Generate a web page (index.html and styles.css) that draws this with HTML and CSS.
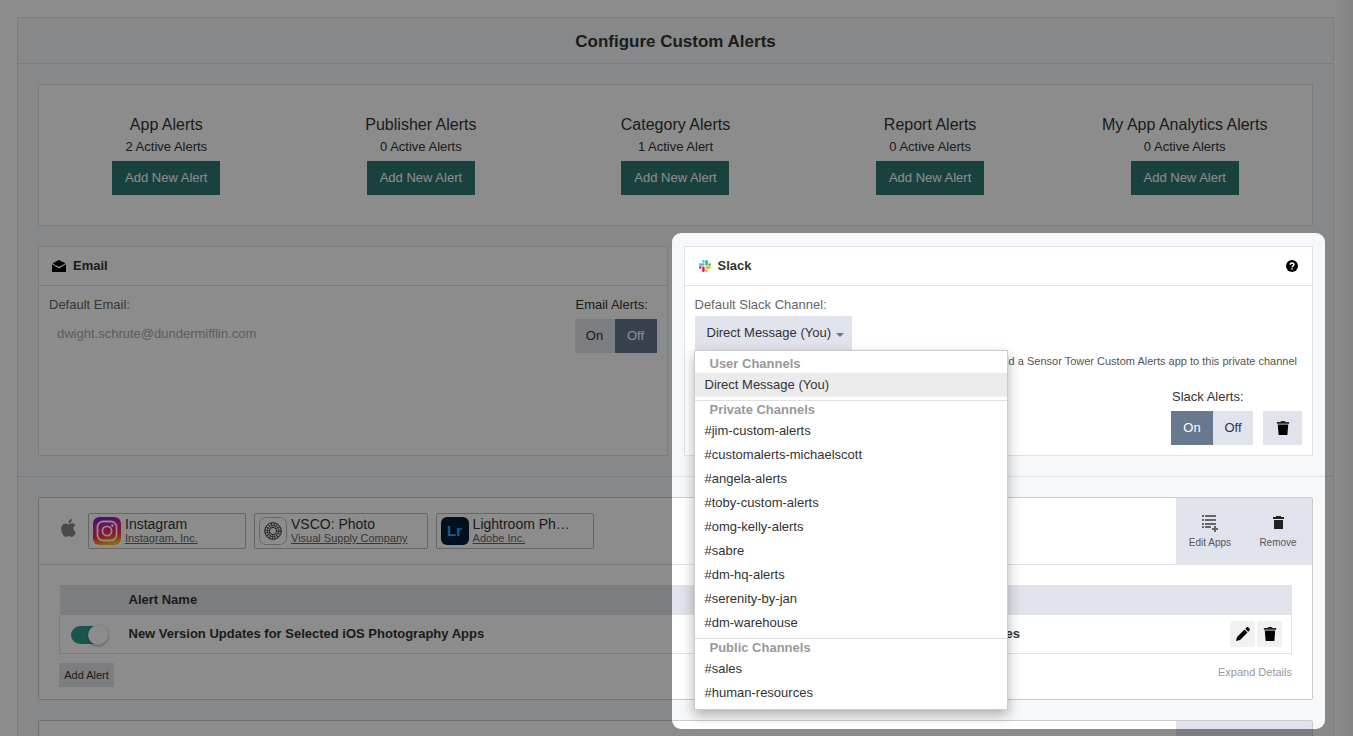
FILE: index.html
```html
<!DOCTYPE html>
<html lang="en">
<head>
<meta charset="utf-8">
<title>Configure Custom Alerts</title>
<link rel="stylesheet" href="styles.css">
</head>
<body>
<svg class="sprite" aria-hidden="true">
  <symbol id="trash" viewBox="0 0 14 16"><path d="M5 0h4l1 1h4v2H0V1h4z" opacity=".85"/><path d="M1 4h12l-1 12H2z"/></symbol>
</svg>
<div class="app">
  <main class="page">
    <h1 class="page-title">Configure Custom Alerts</h1>

    <div class="section">
      <section class="summary">
        <div class="kind"><h2>App Alerts</h2><p>2 Active Alerts</p><button class="add-new" type="button">Add New Alert</button></div>
        <div class="kind"><h2>Publisher Alerts</h2><p>0 Active Alerts</p><button class="add-new" type="button">Add New Alert</button></div>
        <div class="kind"><h2>Category Alerts</h2><p>1 Active Alert</p><button class="add-new" type="button">Add New Alert</button></div>
        <div class="kind"><h2>Report Alerts</h2><p>0 Active Alerts</p><button class="add-new" type="button">Add New Alert</button></div>
        <div class="kind"><h2>My App Analytics Alerts</h2><p>0 Active Alerts</p><button class="add-new" type="button">Add New Alert</button></div>
      </section>

      <div class="channels">
        <section class="panel">
          <header class="panel-head">
            <svg width="14" height="12" viewBox="0 0 14 12" aria-hidden="true"><path d="M7 0l6.400 3.200-2.400 1.600L7 6.800 3 4.800.6 3.200z"/><path d="M0 4.200L7 8.600l7-4.400V12H0z"/></svg>
            <h2>Email</h2>
          </header>
          <div class="panel-body email-body">
            <div class="field">
              <label class="muted" for="email">Default Email:</label>
              <input class="email" id="email" type="email" value="dwight.schrute@dundermifflin.com" disabled>
            </div>
            <div class="switcher">
              <span class="switch-label">Email Alerts:</span>
              <div class="segments"><button type="button">On</button><button type="button" class="active">Off</button></div>
            </div>
          </div>
        </section>

        <section class="panel slack">
          <header class="panel-head">
            <svg width="12" height="12" viewBox="0 0 24 24" aria-hidden="true">
              <defs><path id="lobe" d="M5.042 15.165a2.528 2.528 0 0 1-2.520 2.523A2.528 2.528 0 0 1 0 15.165a2.527 2.527 0 0 1 2.522-2.520h2.520zM6.313 15.165a2.527 2.527 0 0 1 5.042 0v6.313a2.521 2.521 0 0 1-5.042 0z"/></defs>
              <use href="#lobe" fill="#e01e5a"/><use href="#lobe" fill="#36c5f0" transform="rotate(90 12 12)"/><use href="#lobe" fill="#2eb67d" transform="rotate(180 12 12)"/><use href="#lobe" fill="#ecb22e" transform="rotate(270 12 12)"/>
            </svg>
            <h2>Slack</h2>
            <button class="help" type="button" aria-label="Help">
              <svg width="12" height="12" viewBox="0 0 12 12" aria-hidden="true"><circle cx="6" cy="6" r="6"/><path d="M4.200 4.700C4.200 2.300 7.900 2.400 7.900 4.500C7.900 5.800 6.100 5.700 6.100 7.200M6.100 8.300V9.600" fill="none" stroke="#fff" stroke-width="1.500"/></svg>
            </button>
          </header>
          <div class="panel-body">
            <span class="muted" id="channel-label">Default Slack Channel:</span>
            <div class="picker">
              <button class="picker-button" type="button" aria-haspopup="listbox" aria-expanded="true" aria-labelledby="channel-label">Direct Message (You)<span class="caret"></span></button>
              <div class="menu" role="listbox" aria-labelledby="channel-label">
                <div class="group" role="group" aria-label="User Channels">
                  <div class="group-title">User Channels</div>
                  <button type="button" role="option" aria-selected="true">Direct Message (You)</button>
                </div>
                <div class="group" role="group" aria-label="Private Channels">
                  <div class="group-title">Private Channels</div>
                  <button type="button" role="option">#jim-custom-alerts</button>
                  <button type="button" role="option">#customalerts-michaelscott</button>
                  <button type="button" role="option">#angela-alerts</button>
                  <button type="button" role="option">#toby-custom-alerts</button>
                  <button type="button" role="option">#omg-kelly-alerts</button>
                  <button type="button" role="option">#sabre</button>
                  <button type="button" role="option">#dm-hq-alerts</button>
                  <button type="button" role="option">#serenity-by-jan</button>
                  <button type="button" role="option">#dm-warehouse</button>
                </div>
                <div class="group" role="group" aria-label="Public Channels">
                  <div class="group-title">Public Channels</div>
                  <button type="button" role="option">#sales</button>
                  <button type="button" role="option">#human-resources</button>
                </div>
              </div>
            </div>
            <p class="note">Add a Sensor Tower Custom Alerts app to this private channel</p>
            <div class="slack-controls">
              <div class="switcher">
                <span class="switch-label">Slack Alerts:</span>
                <div class="segments"><button type="button" class="active">On</button><button type="button">Off</button></div>
              </div>
              <button class="delete" type="button" aria-label="Delete Slack integration"><svg width="14" height="14"><use href="#trash"/></svg></button>
            </div>
          </div>
          <div class="spotlight"></div>
        </section>
      </div>
    </div>

    <div class="section list">
      <article class="alert-card">
        <header class="card-head">
          <svg class="apple" width="17" height="18" viewBox="1 0 22 24" role="img" aria-label="iOS"><path d="M12.152 6.896c-.948 0-2.415-1.078-3.960-1.040-2.040.027-3.910 1.183-4.961 3.014-2.117 3.675-.546 9.103 1.519 12.090 1.013 1.454 2.208 3.090 3.792 3.039 1.520-.065 2.090-.987 3.935-.987 1.831 0 2.350.987 3.960.948 1.637-.026 2.676-1.480 3.676-2.948 1.156-1.688 1.636-3.325 1.662-3.415-.039-.013-3.182-1.221-3.220-4.857-.026-3.040 2.480-4.494 2.597-4.559-1.429-2.090-3.623-2.324-4.390-2.376-2-.156-3.675 1.090-4.610 1.090zM15.530 3.830c.843-1.012 1.400-2.427 1.245-3.830-1.207.052-2.662.805-3.532 1.818-.780.896-1.454 2.338-1.273 3.714 1.338.104 2.715-.688 3.559-1.701"/></svg>
          <div class="apps">
            <div class="app-chip">
              <svg class="app-icon" viewBox="0 0 28 28" aria-hidden="true">
                <defs>
                  <linearGradient id="ig" x1=".2" y1="0" x2=".4" y2="1"><stop offset="0" stop-color="#7a1fe0"/><stop offset=".35" stop-color="#dc1c9c"/><stop offset=".65" stop-color="#f8264e"/><stop offset=".9" stop-color="#ff8a1a"/><stop offset="1" stop-color="#ffc02e"/></linearGradient>
                </defs>
                <rect width="28" height="28" rx="6" fill="url(#ig)"/>
                <g fill="none" stroke="#fff" stroke-width="1.800"><rect x="4.500" y="4.500" width="19" height="19" rx="5.500"/><circle cx="14" cy="14" r="4.600"/></g><circle cx="19.400" cy="8.600" r="1.300" fill="#fff"/>
              </svg>
              <div class="app-text"><span class="app-name">Instagram</span><a href="#">Instagram, Inc.</a></div>
            </div>
            <div class="app-chip">
              <svg class="app-icon" viewBox="0 0 28 28" aria-hidden="true">
                <rect x=".5" y=".5" width="27" height="27" rx="6" fill="#fff" stroke="#bbb"/>
                <g fill="none" stroke="#333"><circle cx="14" cy="14" r="8.300"/><circle cx="14" cy="14" r="5.800" stroke-width=".7"/><circle cx="14" cy="14" r="3.600"/><circle cx="14" cy="14" r="6" stroke-width="4.500" stroke-dasharray=".7 1.656"/></g>
              </svg>
              <div class="app-text"><span class="app-name">VSCO: Photo</span><a href="#">Visual Supply Company</a></div>
            </div>
            <div class="app-chip">
              <span class="app-icon lr" aria-hidden="true">Lr</span>
              <div class="app-text"><span class="app-name">Lightroom Ph…</span><a href="#">Adobe Inc.</a></div>
            </div>
          </div>
          <div class="card-actions">
            <button type="button">
              <svg width="18" height="18" viewBox="0 0 18 18" aria-hidden="true"><path d="M1 1h2v2H1zM4 1h11v2H4zM1 5h2v2H1zM4 5h11v2H4zM1 9h2v2H1zM4 9h11v2H4zM1 12h2v2H1zM4 12h6v2H4zM13 12h2v2h2v2h-2v2h-2v-2h-2v-2h2z" fill="#666"/></svg>
              Edit Apps</button>
            <button type="button">
              <svg width="18" height="18" viewBox="0 0 18 18" aria-hidden="true"><path d="M7 2h5v1h3v2H4V3h3zM5 6h9v9H5z" fill="#222"/></svg>
              Remove</button>
          </div>
        </header>
        <div class="card-body">
          <table class="alerts">
            <thead><tr><th class="col-toggle"></th><th class="col-name">Alert Name</th><th class="col-type"></th><th></th></tr></thead>
            <tbody><tr>
              <td><input class="toggle" type="checkbox" role="switch" aria-label="Alert enabled" checked></td>
              <td>New Version Updates for Selected iOS Photography Apps</td>
              <td class="type">Updates</td>
              <td><div class="row-actions">
                <button type="button" aria-label="Edit"><svg width="14" height="14" viewBox="0 0 14 14"><path d="M0 14l1-4 7.500-7.500 3 3L4 13zM9.300 1.700L10.500.5c.6-.6 1.300-.6 1.900 0l1.100 1.100c.6.6.6 1.300 0 1.900l-1.200 1.200z"/></svg></button>
                <button type="button" aria-label="Delete"><svg width="14" height="14"><use href="#trash"/></svg></button>
              </div></td>
            </tr></tbody>
          </table>
          <footer class="card-foot">
            <button class="add-alert" type="button">Add Alert</button>
            <a class="expand" href="#">Expand Details</a>
          </footer>
        </div>
      </article>
      <article class="alert-card">
        <header class="card-head"><div class="card-actions"></div></header>
      </article>
    </div>
  </main>
</div>
</body>
</html>
```
FILE: styles.css
```css
* { box-sizing: border-box; }
body { margin: 0; font: 13px/18px "Liberation Sans", Arial, sans-serif; color: #333; }
h1, h2, p { margin: 0; font-weight: normal; }
button, input { font: inherit; color: inherit; border: 0; margin: 0; padding: 0; background: none; }
button { cursor: pointer; }
.sprite { position: absolute; width: 0; height: 0; }

.app {
  height: 100vh;
  overflow: hidden auto;
  scrollbar-width: none;
  padding: 17px 19px 0 17px;
  background: linear-gradient(to left, #efefef, #fff 20px);
}
.page { border: 1px solid #dfe2ea; background: #f6f8fa; }
.page-title {
  padding: 13px 12px 10px;
  font-size: 17px;
  line-height: 22px;
  font-weight: bold;
  text-align: center;
  border-bottom: 1px solid #dfe2ea;
}
.section { padding: 20px; }
.list { border-top: 1px solid #dfe2ea; }

/* alert kinds */
.summary {
  display: grid;
  grid-template-columns: repeat(5, 1fr);
  padding: 29px 0 30px;
  margin-bottom: 20px;
  background: #fff;
  border: 1px solid #dfe2ea;
}
.kind { text-align: center; }
.kind h2 { font-size: 16px; line-height: 22px; }
.kind p { line-height: 22px; margin-bottom: 3px; }
.add-new { height: 34px; width: 108px; background: #2f7871; color: #fff; }

/* channels */
.channels { display: grid; grid-template-columns: 1fr 1fr; gap: 16px; }
.panel { background: #fff; border: 1px solid #dfe2ea; min-height: 210px; }
.panel-head {
  display: flex;
  align-items: center;
  gap: 7px;
  height: 39px;
  padding: 0 14px 0 13px;
  border-bottom: 1px solid #dfe2ea;
}
.slack .panel-head { padding-left: 14px; }
.panel-head h2 { font-size: 13px; font-weight: bold; }
.help { display: flex; margin-left: auto; }
.panel-body { padding: 10px; }
.email-body { display: flex; justify-content: space-between; }
.muted { color: #666; display: block; }
.email {
  display: block;
  width: 218px;
  height: 36px;
  margin-top: 1px;
  padding: 0 7px;
  color: #aaa;
  border: 1px solid #fafafa;
  border-radius: 2px;
}
.switcher { display: grid; gap: 5px; align-content: start; }
.switch-label { padding-left: 1px; }
.segments { display: flex; height: 34px; background: #e0e3eb; }
.segments button { width: 40px; }
.segments .active { width: 42px; background: #67788f; color: #fff; }

.slack { position: relative; }
.picker { position: relative; margin-top: 2px; }
.picker-button {
  display: flex;
  align-items: center;
  gap: 5px;
  height: 34px;
  padding: 0 8px 0 12px;
  background: #e0e3eb;
}
.caret { border: 4px solid transparent; border-top-color: #67788f; border-bottom: 0; margin-top: 4px; }
.menu {
  position: absolute;
  top: 34px;
  left: -1px;
  z-index: 2;
  width: 314px;
  padding: 4px 0;
  background: #fff;
  border: 1px solid #ccc;
  box-shadow: 0 5px 12px rgba(0, 0, 0, .3);
}
.group + .group { margin-top: 3px; border-top: 1px solid #e0e0e0; }
.group-title { padding-left: 15px; font-weight: bold; color: #999; }
.menu button { display: block; width: 100%; height: 24px; padding-left: 10px; text-align: left; }
.menu [aria-selected] { background: #ebebeb; }
.note { padding: 3px 5px 0 0; font-size: 11px; line-height: 16px; color: #555; min-height: 38px; text-align: right; }
.slack-controls { display: flex; justify-content: flex-end; align-items: flex-end; gap: 10px; }
.delete { display: grid; place-items: center; width: 39px; height: 34px; background: #e0e3eb; }

/* dims the page around the Slack settings */
.spotlight {
  position: absolute;
  top: -14px;
  left: -13px;
  right: -13px;
  height: 496px;
  z-index: 3;
  border-radius: 9px;
  box-shadow: 0 0 0 3000px rgba(0, 0, 0, .45);
  pointer-events: none;
}

/* alert cards */
.alert-card { background: #fff; border: 1px solid #ccc; border-radius: 2px; }
.alert-card + .alert-card { margin-top: 20px; }
.card-head {
  display: flex;
  align-items: center;
  min-height: 67px;
  padding-left: 21px;
  border-bottom: 1px solid #dfe2ea;
}
.apple { fill: #888; margin-bottom: 6px; }
.apps { display: flex; gap: 8px; margin-left: 11px; }
.app-chip {
  display: flex;
  align-items: center;
  gap: 4px;
  min-width: 158px;
  height: 36px;
  padding: 0 19px 0 4px;
  border: 1px solid #bbb;
  border-radius: 2px;
}
.app-icon { width: 28px; height: 28px; border-radius: 6px; }
.lr { background: #001e36; color: #31a8ff; font-size: 15px; font-weight: bold; line-height: 28px; text-align: center; }
.app-text { display: grid; line-height: 14px; }
.app-name { font-size: 14px; color: #333; }
.app-text a { font-size: 11px; color: #666; text-decoration: underline; }
.card-actions {
  display: grid;
  grid-template-columns: 68px 68px;
  width: 136px;
  align-self: stretch;
  margin: 0 0 -1px auto;
  background: #e0e3eb;
}
.card-actions button {
  display: flex;
  flex-direction: column;
  align-items: center;
  gap: 2px;
  padding-top: 16px;
  font-size: 10px;
  color: #555;
}
.card-body { padding: 20px 20px 12px; }
.alerts { width: 100%; border-collapse: collapse; font-weight: bold; text-align: left; }
.alerts th, .alerts td { padding: 0; }
.alerts th { height: 30px; background: #e0e3eb; }
.alerts td { height: 38px; border-bottom: 1px solid #dfe2ea; }
.alerts td:first-child { border-left: 1px solid #dfe2ea; padding-left: 11px; }
.alerts td:last-child { border-right: 1px solid #dfe2ea; padding-right: 9px; }
.col-toggle { width: 69px; }
.col-name { width: 45%; }
.col-type { width: 337px; }
.type { text-align: right; }
.toggle {
  appearance: none;
  display: flex;
  justify-content: flex-end;
  align-items: center;
  width: 37px;
  height: 18px;
  margin-top: 3px;
  border-radius: 9px;
  background: linear-gradient(to right, #2e9b8a 27px, transparent 27px);
}
.toggle::before {
  content: "";
  width: 20px;
  height: 20px;
  flex: none;
  border-radius: 50%;
  background: #fff;
  box-shadow: 0 1px 3px rgba(0, 0, 0, .4);
}
.row-actions { display: flex; justify-content: flex-end; gap: 2px; }
.row-actions button { display: grid; place-items: center; width: 25px; height: 26px; background: #f1f1f1; border-radius: 2px; }
.card-foot { display: flex; justify-content: space-between; align-items: flex-start; padding-top: 9px; }
.add-alert { width: 55px; height: 24px; font-size: 11px; background: #e0e3eb; }
.expand { font-size: 11px; color: #999; text-decoration: none; }
```
